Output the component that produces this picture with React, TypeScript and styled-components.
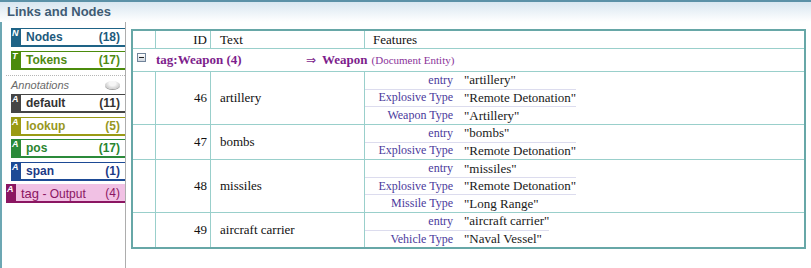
import React from 'react';
import styled, { createGlobalStyle } from 'styled-components';

const GlobalStyle = createGlobalStyle`
  html, body { margin: 0; padding: 0; background: #fff; }
  body { font-family: "Liberation Sans", Arial, sans-serif; }
`;

const Frame = styled.div`
  width: 811px;
  height: 268px;
  box-sizing: border-box;
  border-top: 2px solid #5b91a7;
  display: flex;
  flex-direction: column;
  overflow: hidden;
`;

const Header = styled.div`
  height: 20px;
  flex: none;
  padding-left: 7px;
  background: linear-gradient(#d8e6f0, #ffffff);
  font: bold 13px "Liberation Sans", Arial, sans-serif;
  line-height: 19px;
  color: #3e5b74;
`;

const Body = styled.div`
  flex: 1;
  display: flex;
  border-left: 2px solid #6ca7b3;
  min-height: 0;
`;

const Sidebar = styled.div`
  width: 123px;
  flex: none;
  border-right: 1px solid #adadad;
  padding-top: 6px;
  display: flex;
  flex-direction: column;
`;

const Item = styled.div<{ $c: string; $bg?: string; $sel?: boolean }>`
  height: 19px;
  box-sizing: border-box;
  margin: 0 0 3.5px ${(p) => (p.$sel ? '4px' : '9px')};
  display: flex;
  align-items: center;
  background: ${(p) => p.$bg || '#fff'};
  border-top: 1px solid ${(p) => (p.$sel ? p.$bg : p.$c)};
  border-bottom: 2px solid ${(p) => p.$c};
  color: ${(p) => p.$c};
`;

const Badge = styled.div<{ $c: string }>`
  width: 10px;
  align-self: stretch;
  margin-top: -1px;
  background: ${(p) => p.$c};
  color: #fff;
  font: italic bold 9px "Liberation Sans", Arial, sans-serif;
  line-height: 11px;
  padding-left: 1px;
  box-sizing: border-box;
`;

const Name = styled.span<{ $t?: string; $bold?: boolean }>`
  flex: 1;
  margin-left: 5px;
  font-size: 12px;
  font-weight: ${(p) => (p.$bold === false ? 'normal' : 'bold')};
  color: ${(p) => p.$t || 'inherit'};
  white-space: nowrap;
`;

const Big = styled.span`
  font-size: 13px;
`;

const Count = styled.span<{ $t?: string; $bold?: boolean }>`
  padding-right: 5px;
  font-size: 12px;
  font-weight: ${(p) => (p.$bold === false ? 'normal' : 'bold')};
  color: ${(p) => p.$t || 'inherit'};
`;

const Divider = styled.div`
  margin: 2px 0 0 4px;
  border-top: 1px dotted #b5b5b5;
`;

const AnnRow = styled.div`
  height: 17px;
  margin: 0 5px 1px 9px;
  display: flex;
  align-items: center;
  justify-content: space-between;
  font: italic 11px "Liberation Sans", Arial, sans-serif;
  color: #6a6a6a;
`;

const Toggle = styled.span`
  width: 15px;
  height: 8px;
  border-radius: 50%;
  background: radial-gradient(ellipse at 50% 30%, #f6f6f6 30%, #b5b5b5 95%);
  box-shadow: 0 1px 0 #a0a0a0;
`;

const Main = styled.div`
  flex: 1;
  padding: 7px 0 0 5px;
`;

const Table = styled.div`
  width: 675px;
  box-sizing: border-box;
  border: 2px solid #67a7a7;
  font-family: "Liberation Serif", "Times New Roman", serif;
  font-size: 13px;
  color: #111;
`;

const Row = styled.div<{ $last?: boolean }>`
  display: grid;
  grid-template-columns: 23px 55px 154px 1fr;
  border-bottom: ${(p) => (p.$last ? 'none' : '1px solid #99cfcb')};
`;

const Cell = styled.div<{ $align?: string; $pad?: string; $h?: string }>`
  box-sizing: border-box;
  border-right: 1px solid #99cfcb;
  display: flex;
  align-items: center;
  justify-content: ${(p) => p.$align || 'flex-start'};
  padding: ${(p) => p.$pad || '0'};
  height: ${(p) => p.$h || 'auto'};
  &:last-child { border-right: none; }
`;

const GroupRow = styled.div`
  height: 22px;
  border-bottom: 1px solid #99cfcb;
  display: flex;
  align-items: center;
  color: #7d1e8c;
`;

const IconSlot = styled.div`
  width: 23px;
  align-self: stretch;
  padding: 4px 0 0 4px;
  box-sizing: border-box;
`;

const MinusBox = styled.div`
  width: 9px;
  height: 9px;
  box-sizing: border-box;
  border: 1px solid #71849a;
  background: linear-gradient(#ffffff, #cfd6de);
  display: flex;
  align-items: center;
  justify-content: center;
  &::after {
    content: '';
    width: 5px;
    height: 1px;
    background: #222;
  }
`;

const GroupLabel = styled.span`
  width: 150px;
  font-weight: bold;
  white-space: nowrap;
`;

const Arrow = styled.span`
  font-family: "DejaVu Sans", sans-serif;
  font-size: 12px;
  margin-right: 6px;
`;

const TypeName = styled.span`
  font-weight: bold;
  margin-right: 4px;
`;

const TypeNote = styled.span`
  font-size: 11px;
  color: #8a3399;
`;

const Feats = styled.div`
  display: flex;
  flex-direction: column;
`;

const Feat = styled.div<{ $last?: boolean }>`
  height: 16.65px;
  display: flex;
  align-items: center;
  border-bottom: ${(p) => (p.$last ? 'none' : '1px solid #dcdcee')};
`;

const Key = styled.span`
  width: 91px;
  flex: none;
  box-sizing: border-box;
  padding-right: 3px;
  text-align: right;
  font-size: 12px;
  color: #4b3a9c;
  white-space: nowrap;
`;

const Val = styled.span`
  padding-left: 8px;
  color: #1a1a1a;
  white-space: nowrap;
`;

type Side = { letter: string; name: string; count: number; c: string; t: string };

const top: Side[] = [
  { letter: 'N', name: 'Nodes', count: 18, c: '#1e6386', t: '#1d5a7c' },
  { letter: 'T', name: 'Tokens', count: 17, c: '#4b8b0c', t: '#4f8a12' },
];

const anns: Side[] = [
  { letter: 'A', name: 'default', count: 11, c: '#454545', t: '#333333' },
  { letter: 'A', name: 'lookup', count: 5, c: '#9a9a14', t: '#979722' },
  { letter: 'A', name: 'pos', count: 17, c: '#2b8a3a', t: '#2a8530' },
  { letter: 'A', name: 'span', count: 1, c: '#1d4a95', t: '#1c3a86' },
];

const rows = [
  { id: 46, text: 'artillery', feats: [['entry', 'artillery'], ['Explosive Type', 'Remote Detonation'], ['Weapon Type', 'Artillery']] },
  { id: 47, text: 'bombs', feats: [['entry', 'bombs'], ['Explosive Type', 'Remote Detonation']] },
  { id: 48, text: 'missiles', feats: [['entry', 'missiles'], ['Explosive Type', 'Remote Detonation'], ['Missile Type', 'Long Range']] },
  { id: 49, text: 'aircraft carrier', feats: [['entry', 'aircraft carrier'], ['Vehicle Type', 'Naval Vessel']] },
];

const SideItem = ({ s }: { s: Side }) => (
  <Item $c={s.c}>
    <Badge $c={s.c}>{s.letter}</Badge>
    <Name $t={s.t}>{s.name}</Name>
    <Count $t={s.t}>({s.count})</Count>
  </Item>
);

export default function App() {
  return (
    <>
      <GlobalStyle />
      <Frame>
        <Header>Links and Nodes</Header>
        <Body>
          <Sidebar>
            {top.map((s) => (
              <SideItem key={s.name} s={s} />
            ))}
            <Divider />
            <AnnRow>
              <span>Annotations</span>
              <Toggle />
            </AnnRow>
            {anns.map((s) => (
              <SideItem key={s.name} s={s} />
            ))}
            <Item $c="#8b1662" $bg="#f1c1e4" $sel>
              <Badge $c="#8b1662">A</Badge>
              <Name $t="#8b1662" $bold={false}>
                <Big>tag</Big> - Output
              </Name>
              <Count $t="#8b1662" $bold={false}>(4)</Count>
            </Item>
          </Sidebar>
          <Main>
            <Table>
              <Row>
                <Cell $h="17px" />
                <Cell $h="17px" $align="flex-end" $pad="0 3px 0 0">ID</Cell>
                <Cell $h="17px" $pad="0 0 0 9px">Text</Cell>
                <Cell $h="17px" $pad="0 0 0 8px">Features</Cell>
              </Row>
              <GroupRow>
                <IconSlot>
                  <MinusBox />
                </IconSlot>
                <GroupLabel>tag:Weapon (4)</GroupLabel>
                <Arrow>⇒</Arrow>
                <TypeName>Weapon</TypeName>
                <TypeNote>(Document Entity)</TypeNote>
              </GroupRow>
              {rows.map((r, i) => (
                <Row key={r.id} $last={i === rows.length - 1}>
                  <Cell />
                  <Cell $align="flex-end" $pad="0 3px 0 0">{r.id}</Cell>
                  <Cell $pad="0 0 0 9px">{r.text}</Cell>
                  <Cell>
                    <Feats>
                      {r.feats.map(([k, v], j) => (
                        <Feat key={k} $last={j === r.feats.length - 1}>
                          <Key>{k}</Key>
                          <Val>"{v}"</Val>
                        </Feat>
                      ))}
                    </Feats>
                  </Cell>
                </Row>
              ))}
            </Table>
          </Main>
        </Body>
      </Frame>
    </>
  );
}
